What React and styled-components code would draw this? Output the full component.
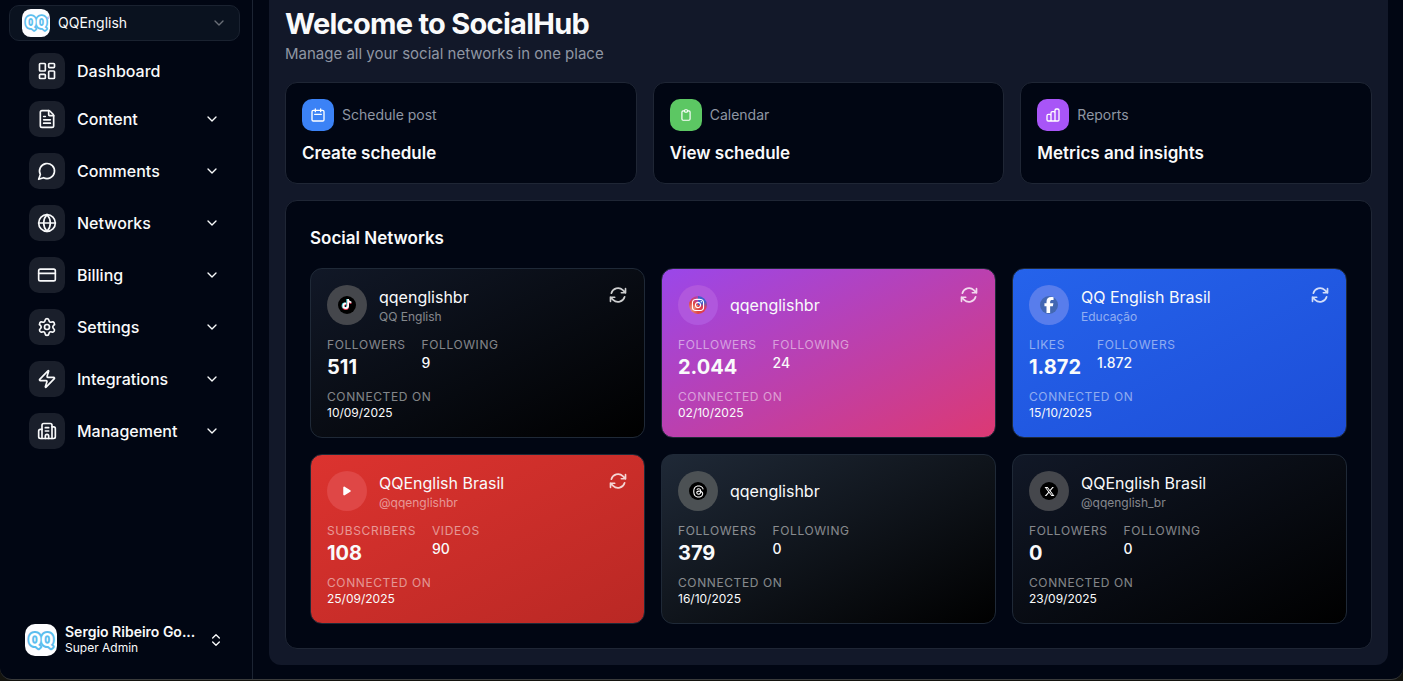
import React from "react";
import styled, { createGlobalStyle } from "styled-components";
import {
  LayoutDashboard,
  FileText,
  Globe,
  CreditCard,
  Settings,
  Zap,
  Building2,
  ChevronDown,
  ChevronsUpDown,
} from "lucide-react";
import { FaTiktok, FaInstagram, FaFacebookF, FaThreads, FaXTwitter, FaPlay } from "react-icons/fa6";

const GlobalStyle = createGlobalStyle`
  *, *::before, *::after { box-sizing: border-box; }
  body {
    margin: 0;
    background: #14140f;
    color: #f9fafb;
    font-family: Inter, "Liberation Sans", sans-serif;
    font-size: 16px;
    line-height: 24px;
    -webkit-font-smoothing: antialiased;
  }
  h1, h2, h3, p, dl, dt, dd, ul { margin: 0; padding: 0; }
  ul { list-style: none; }
  button, select { font: inherit; color: inherit; }
  a { color: inherit; text-decoration: none; }
`;

const Shell = styled.div`
  display: flex;
  min-height: calc(100vh - 1px);
  background: #010613;
  border-bottom: 1px solid #3a3b3b;
  border-radius: 0 0 12px 12px;
`;

const Sidebar = styled.aside`
  display: flex;
  flex-direction: column;
  flex: none;
  width: 253px;
  padding: 5px 12px 23px 9px;
  border-right: 1px solid #1c2433;
`;

const OrgPicker = styled.label`
  display: flex;
  align-items: center;
  gap: 8px;
  height: 36px;
  padding: 0 12px;
  border: 1px solid #1a2230;
  border-radius: 10px;
  background: #0a121f;
  svg:last-child { flex: none; opacity: 0.4; pointer-events: none; }
`;

const OrgSelect = styled.select`
  flex: 1;
  min-width: 0;
  padding: 0;
  border: 0;
  appearance: none;
  background: transparent;
  font-size: 14px;
  line-height: 20px;
`;

const Nav = styled.nav`
  margin-top: 12px;
  padding: 0 20px;
`;

const NavGroup = styled.ul`
  display: flex;
  flex-direction: column;
  gap: 16px;
  margin-bottom: 12px;
`;

const NavItem = styled.button`
  display: flex;
  align-items: center;
  gap: 12px;
  width: 100%;
  padding: 0;
  border: 0;
  background: none;
  font-weight: 500;
  text-align: left;
  cursor: pointer;
`;

const NavIcon = styled.span`
  display: grid;
  place-items: center;
  flex: none;
  width: 36px;
  height: 36px;
  border-radius: 10px;
  background: #1a1f2b;
`;

const NavLabel = styled.span`
  flex: 1;
`;

const UserButton = styled.button`
  display: flex;
  align-items: center;
  gap: 8px;
  margin-top: auto;
  padding: 0 16px;
  border: 0;
  background: none;
  text-align: left;
  cursor: pointer;
  > svg:last-child { flex: none; }
`;

const UserText = styled.span`
  flex: 1;
  min-width: 0;
  white-space: nowrap;
`;

const UserName = styled.span`
  display: block;
  font-size: 14px;
  line-height: 16px;
  font-weight: 600;
`;

const UserRole = styled.span`
  display: block;
  font-size: 12px;
  line-height: 16px;
`;

const Main = styled.main`
  flex: 1;
  min-width: 0;
  padding: 0 15px 14px 16px;
`;

const Content = styled.div`
  display: flex;
  flex-direction: column;
  gap: 16px;
  padding: 6px 16px 16px;
  border-radius: 0 0 12px 12px;
  background: #121829;
`;

const Title = styled.h1`
  font-size: 29px;
  line-height: 36px;
  font-weight: 700;
  letter-spacing: -0.025em;
`;

const Subtitle = styled.p`
  color: #8f96a3;
  font-size: 15px;
`;

const Shortcuts = styled.div`
  display: grid;
  grid-template-columns: repeat(3, minmax(0, 1fr));
  gap: 16px;
`;

const ShortcutCard = styled.a`
  display: flex;
  flex-direction: column;
  gap: 8px;
  padding: 16px;
  border: 1px solid #1f2635;
  border-radius: 12px;
  background: #010613;
`;

const ShortcutHead = styled.span`
  display: flex;
  align-items: center;
  gap: 8px;
  color: #8f96a3;
  font-size: 14px;
  line-height: 20px;
`;

const ShortcutIcon = styled.span`
  display: grid;
  place-items: center;
  width: 32px;
  height: 32px;
  border-radius: 10px;
  background: ${(p) => p.$color};
  color: #fff;
`;

const ShortcutTitle = styled.span`
  font-size: 17px;
  line-height: 28px;
  font-weight: 600;
`;

const Panel = styled.section`
  padding: 24px;
  border: 1px solid #1f2635;
  border-radius: 12px;
  background: #010613;
`;

const PanelTitle = styled.h2`
  margin-bottom: 16px;
  font-size: 17px;
  line-height: 27px;
  font-weight: 600;
`;

const NetworkGrid = styled.div`
  display: grid;
  grid-template-columns: repeat(3, minmax(0, 1fr));
  gap: 16px;
`;

const NetworkCard = styled.article`
  padding: 16px;
  border: 1px solid #1f2937;
  border-radius: 12px;
  background: linear-gradient(to bottom right, ${(p) => p.$from}, ${(p) => p.$to});
`;

const NetworkHead = styled.header`
  display: flex;
  align-items: center;
  gap: 12px;
  height: 40px;
`;

const Avatar = styled.span`
  display: grid;
  place-items: center;
  flex: none;
  width: 40px;
  height: 40px;
  border-radius: 50%;
  background: ${(p) => p.$color};
`;

const Badge = styled.span`
  display: grid;
  place-items: center;
  width: 18px;
  height: 18px;
  border-radius: 50%;
  background: ${(p) => p.$color};
  color: #fff;
`;

const NetworkNames = styled.div`
  flex: 1;
  min-width: 0;
`;

const NetworkName = styled.h3`
  font-size: 16px;
  line-height: 24px;
  font-weight: 400;
`;

const Muted = styled.p`
  color: rgba(255, 255, 255, 0.5);
  font-size: 12px;
  line-height: 16px;
`;

const RefreshButton = styled.button`
  display: flex;
  align-self: flex-start;
  padding: 0;
  border: 0;
  background: none;
  color: rgba(255, 255, 255, 0.8);
  cursor: pointer;
`;

const Stats = styled.dl`
  display: flex;
  gap: 16px;
  margin: 12px 0 8px;
`;

const StatLabel = styled.dt`
  color: rgba(255, 255, 255, 0.5);
  font-size: 12px;
  line-height: 16px;
  letter-spacing: 0.05em;
  text-transform: uppercase;
`;

const StatValue = styled.dd`
  font-size: ${(p) => (p.$large ? 20 : 14)}px;
  line-height: ${(p) => (p.$large ? 28 : 20)}px;
  font-weight: ${(p) => (p.$large ? 700 : 500)};
`;

const DateValue = styled.dd`
  font-size: 12px;
  line-height: 16px;
`;

const LogoMark = styled.svg`
  flex: none;
`;

function Logo({ size, registered }) {
  return (
    <LogoMark width={size} height={size} viewBox="0 0 32 32" aria-hidden="true">
      <rect width="32" height="32" rx="10" fill="#fdfdff" />
      <text
        x="16"
        y="22"
        textAnchor="middle"
        fontFamily="Roboto, sans-serif"
        fontWeight="700"
        fontSize="18"
        fill="#fff"
        stroke="#5cbdee"
        strokeWidth="4"
        strokeLinejoin="round"
        paintOrder="stroke"
      >
        QQ
      </text>
      {registered && <circle cx="30" cy="10" r="1" fill="none" stroke="#a9a4e8" />}
    </LogoMark>
  );
}

function Stroke({ d, size, width = 2 }) {
  return (
    <svg
      width={size}
      height={size}
      viewBox="0 0 24 24"
      fill="none"
      stroke="currentColor"
      strokeWidth={width}
      strokeLinecap="round"
      strokeLinejoin="round"
      aria-hidden="true"
    >
      <path d={d} />
    </svg>
  );
}

const BUBBLE = "M7.9 20A9 9 0 1 0 4 16.1L2 22Z";
const CALENDAR =
  "M8 7V3m8 4V3m-9 8h10M5 21h14a2 2 0 002-2V7a2 2 0 00-2-2H5a2 2 0 00-2 2v12a2 2 0 002 2z";
const CLIPBOARD =
  "M9 5H7a2 2 0 00-2 2v12a2 2 0 002 2h10a2 2 0 002-2V7a2 2 0 00-2-2h-2M9 5a2 2 0 002 2h2a2 2 0 002-2M9 5a2 2 0 012-2h2a2 2 0 012 2";
const BARS =
  "M9 19v-6a2 2 0 00-2-2H5a2 2 0 00-2 2v6a2 2 0 002 2h2a2 2 0 002-2zm0 0V9a2 2 0 012-2h2a2 2 0 012 2v10m-6 0a2 2 0 002 2h2a2 2 0 002-2m0 0V5a2 2 0 012-2h2a2 2 0 012 2v14a2 2 0 01-2 2h-2a2 2 0 01-2-2z";
const REFRESH =
  "M16.023 9.348h4.992v-.001M2.985 19.644v-4.992m0 0h4.992m-4.993 0l3.181 3.183a8.25 8.25 0 0013.803-3.7M4.031 9.865a8.25 8.25 0 0113.803-3.7l3.181 3.182m0-4.991v4.99";

const NAV = [
  { label: "Content", icon: <FileText size={20} /> },
  { label: "Comments", icon: <Stroke d={BUBBLE} size={20} /> },
  { label: "Networks", icon: <Globe size={20} /> },
  { label: "Billing", icon: <CreditCard size={20} /> },
  { label: "Settings", icon: <Settings size={20} /> },
  { label: "Integrations", icon: <Zap size={20} /> },
  { label: "Management", icon: <Building2 size={20} /> },
];

const SHORTCUTS = [
  { label: "Schedule post", title: "Create schedule", color: "#3b82f6", icon: CALENDAR, size: 16 },
  { label: "Calendar", title: "View schedule", color: "#5cc763", icon: CLIPBOARD, size: 14 },
  { label: "Reports", title: "Metrics and insights", color: "#a855f7", icon: BARS, size: 16 },
];

function TikTokMark() {
  return (
    <svg width="12" height="12" viewBox="0 0 12 12" aria-hidden="true">
      <FaTiktok size={10} color="#3fd5e0" />
      <g transform="translate(1 1)"><FaTiktok size={10} color="#ef3b5b" /></g>
      <g transform="translate(1 0)"><FaTiktok size={10} color="#fff" /></g>
    </svg>
  );
}

const NETWORKS = [
  {
    name: "qqenglishbr",
    detail: "QQ English",
    stats: [["Followers", "511"], ["Following", "9"]],
    date: "10/09/2025",
    from: "#111827",
    to: "#000",
    avatar: "#45474c",
    badge: "#000",
    icon: <TikTokMark />,
    refresh: true,
  },
  {
    name: "qqenglishbr",
    stats: [["Followers", "2.044"], ["Following", "24"]],
    date: "02/10/2025",
    from: "#9a47ea",
    to: "#dc3973",
    avatar: "#b057dd",
    badge: "conic-gradient(#3f5fcb 0 18%, #d83b5c 30%, #e0453f 50%, #e88b78 65%, #e0453f 80%, #b53fae)",
    icon: <FaInstagram size={14} />,
    refresh: true,
  },
  {
    name: "QQ English Brasil",
    detail: "Educação",
    stats: [["Likes", "1.872"], ["Followers", "1.872"]],
    date: "15/10/2025",
    from: "#2563eb",
    to: "#1d4ed8",
    avatar: "#587dec",
    badge: "#4267b2",
    icon: <FaFacebookF size={16} />,
    refresh: true,
  },
  {
    name: "QQEnglish Brasil",
    detail: "@qqenglishbr",
    stats: [["Subscribers", "108"], ["Videos", "90"]],
    date: "25/09/2025",
    from: "#dc332f",
    to: "#b92824",
    avatar: "#df4746",
    badge: "transparent",
    icon: <FaPlay size={10} />,
    refresh: true,
  },
  {
    name: "qqenglishbr",
    stats: [["Followers", "379"], ["Following", "0"]],
    date: "16/10/2025",
    from: "#1f2937",
    to: "#000",
    avatar: "#4c5154",
    badge: "#000",
    icon: <FaThreads size={13} />,
  },
  {
    name: "QQEnglish Brasil",
    detail: "@qqenglish_br",
    stats: [["Followers", "0"], ["Following", "0"]],
    date: "23/09/2025",
    from: "#111827",
    to: "#000",
    avatar: "#45474c",
    badge: "#000",
    icon: <FaXTwitter size={11} />,
  },
];

function Network({ data }) {
  return (
    <NetworkCard $from={data.from} $to={data.to}>
      <NetworkHead>
        <Avatar $color={data.avatar}>
          <Badge $color={data.badge}>{data.icon}</Badge>
        </Avatar>
        <NetworkNames>
          <NetworkName>{data.name}</NetworkName>
          {data.detail && <Muted>{data.detail}</Muted>}
        </NetworkNames>
        {data.refresh && (
          <RefreshButton type="button" aria-label="Refresh">
            <Stroke d={REFRESH} size={20} />
          </RefreshButton>
        )}
      </NetworkHead>
      <Stats>
        {data.stats.map(([label, value], i) => (
          <div key={label}>
            <StatLabel>{label}</StatLabel>
            <StatValue $large={i === 0}>{value}</StatValue>
          </div>
        ))}
      </Stats>
      <dl>
        <StatLabel>Connected on</StatLabel>
        <DateValue>{data.date}</DateValue>
      </dl>
    </NetworkCard>
  );
}

export default function App() {
  return (
    <>
      <GlobalStyle />
      <Shell>
        <Sidebar>
          <OrgPicker>
            <Logo size={28} registered />
            <OrgSelect aria-label="Organization" defaultValue="QQEnglish">
              <option>QQEnglish</option>
            </OrgSelect>
            <ChevronDown size={16} />
          </OrgPicker>
          <Nav>
            <NavGroup>
              <li>
                <NavItem as="a" href="#dashboard">
                  <NavIcon><LayoutDashboard size={20} /></NavIcon>
                  <NavLabel>Dashboard</NavLabel>
                </NavItem>
              </li>
            </NavGroup>
            <NavGroup>
              {NAV.map((item) => (
                <li key={item.label}>
                  <NavItem type="button" aria-expanded="false">
                    <NavIcon>{item.icon}</NavIcon>
                    <NavLabel>{item.label}</NavLabel>
                    <ChevronDown size={16} />
                  </NavItem>
                </li>
              ))}
            </NavGroup>
          </Nav>
          <UserButton type="button">
            <Logo size={32} />
            <UserText>
              <UserName>Sergio Ribeiro Go...</UserName>
              <UserRole>Super Admin</UserRole>
            </UserText>
            <ChevronsUpDown size={16} />
          </UserButton>
        </Sidebar>
        <Main>
          <Content>
            <header>
              <Title>Welcome to SocialHub</Title>
              <Subtitle>Manage all your social networks in one place</Subtitle>
            </header>
            <Shortcuts>
              {SHORTCUTS.map((s) => (
                <ShortcutCard key={s.label} href="#shortcut">
                  <ShortcutHead>
                    <ShortcutIcon $color={s.color}>
                      <Stroke d={s.icon} size={s.size} />
                    </ShortcutIcon>
                    {s.label}
                  </ShortcutHead>
                  <ShortcutTitle>{s.title}</ShortcutTitle>
                </ShortcutCard>
              ))}
            </Shortcuts>
            <Panel>
              <PanelTitle>Social Networks</PanelTitle>
              <NetworkGrid>
                {NETWORKS.map((n) => (
                  <Network key={n.date} data={n} />
                ))}
              </NetworkGrid>
            </Panel>
          </Content>
        </Main>
      </Shell>
    </>
  );
}
